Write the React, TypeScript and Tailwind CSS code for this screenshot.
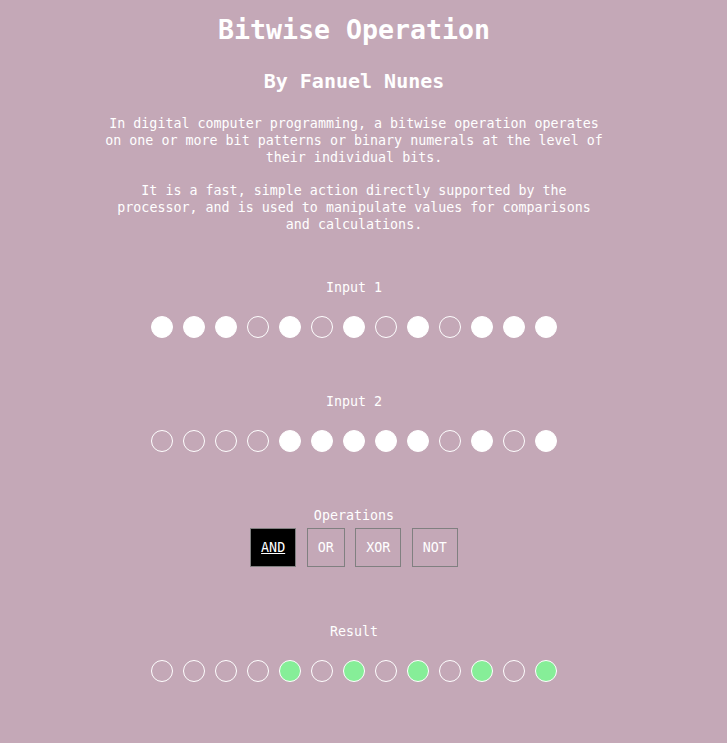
import React, { useState } from 'react';

type Op = 'AND' | 'OR' | 'XOR' | 'NOT';

const INPUT_1 = [1, 1, 1, 0, 1, 0, 1, 0, 1, 0, 1, 1, 1];
const INPUT_2 = [0, 0, 0, 0, 1, 1, 1, 1, 1, 0, 1, 0, 1];

function compute(op: Op, a: number[], b: number[]) {
  return a.map((bit, i) => {
    if (op === 'AND') return bit & b[i];
    if (op === 'OR') return bit | b[i];
    if (op === 'XOR') return bit ^ b[i];
    return bit ? 0 : 1;
  });
}

function BitRow({
  bits,
  onToggle,
  green,
}: {
  bits: number[];
  onToggle?: (i: number) => void;
  green?: boolean;
}) {
  return (
    <div className="flex justify-center gap-[10px]">
      {bits.map((bit, i) => (
        <button
          key={i}
          onClick={() => onToggle && onToggle(i)}
          className={`w-[22px] h-[22px] rounded-full border border-white ${
            bit ? (green ? 'bg-[#86ee98]' : 'bg-white') : 'bg-transparent'
          }`}
        />
      ))}
    </div>
  );
}

export default function App() {
  const [a, setA] = useState<number[]>(INPUT_1);
  const [b, setB] = useState<number[]>(INPUT_2);
  const [op, setOp] = useState<Op>('AND');

  const result = compute(op, a, b);

  const toggle = (setter: typeof setA) => (i: number) =>
    setter(prev => prev.map((v, j) => (j === i ? (v ? 0 : 1) : v)));

  return (
    <div className="min-h-screen bg-[#c4a8b7] text-white font-['DejaVu_Sans_Mono',monospace] text-[13.33px] leading-[17px]">
      <div className="w-[708px] flex flex-col items-center text-center pt-[14px] pb-10">
        <h1 className="text-[26.6px] leading-[32px] font-bold">Bitwise Operation</h1>
        <h2 className="mt-[23px] text-[20px] leading-[24px] font-bold">By Fanuel Nunes</h2>

        <p className="mt-[21.5px] w-[504px]">
          In digital computer programming, a bitwise operation operates on one or more bit patterns or binary
          numerals at the level of their individual bits.
        </p>
        <p className="mt-4 w-[504px]">
          It is a fast, simple action directly supported by the processor, and is used to manipulate values for
          comparisons and calculations.
        </p>

        <section className="mt-[46px]">
          <div>Input 1</div>
          <div className="mt-[20.5px]">
            <BitRow bits={a} onToggle={toggle(setA)} />
          </div>
        </section>

        <section className="mt-[54.5px]">
          <div>Input 2</div>
          <div className="mt-[20.5px]">
            <BitRow bits={b} onToggle={toggle(setB)} />
          </div>
        </section>

        <section className="mt-[54.5px]">
          <div>Operations</div>
          <div className="mt-[4.5px] flex justify-center gap-[10.5px]">
            {(['AND', 'OR', 'XOR', 'NOT'] as const).map(name => (
              <button
                key={name}
                onClick={() => setOp(name)}
                className={`h-[39px] px-[10px] border border-[#808080] text-[13.33px] text-white ${
                  op === name ? 'bg-black underline' : 'bg-transparent'
                }`}
              >
                {name}
              </button>
            ))}
          </div>
        </section>

        <section className="mt-[55.5px]">
          <div>Result</div>
          <div className="mt-[20.5px]">
            <BitRow bits={result} green />
          </div>
        </section>
      </div>
    </div>
  );
}
